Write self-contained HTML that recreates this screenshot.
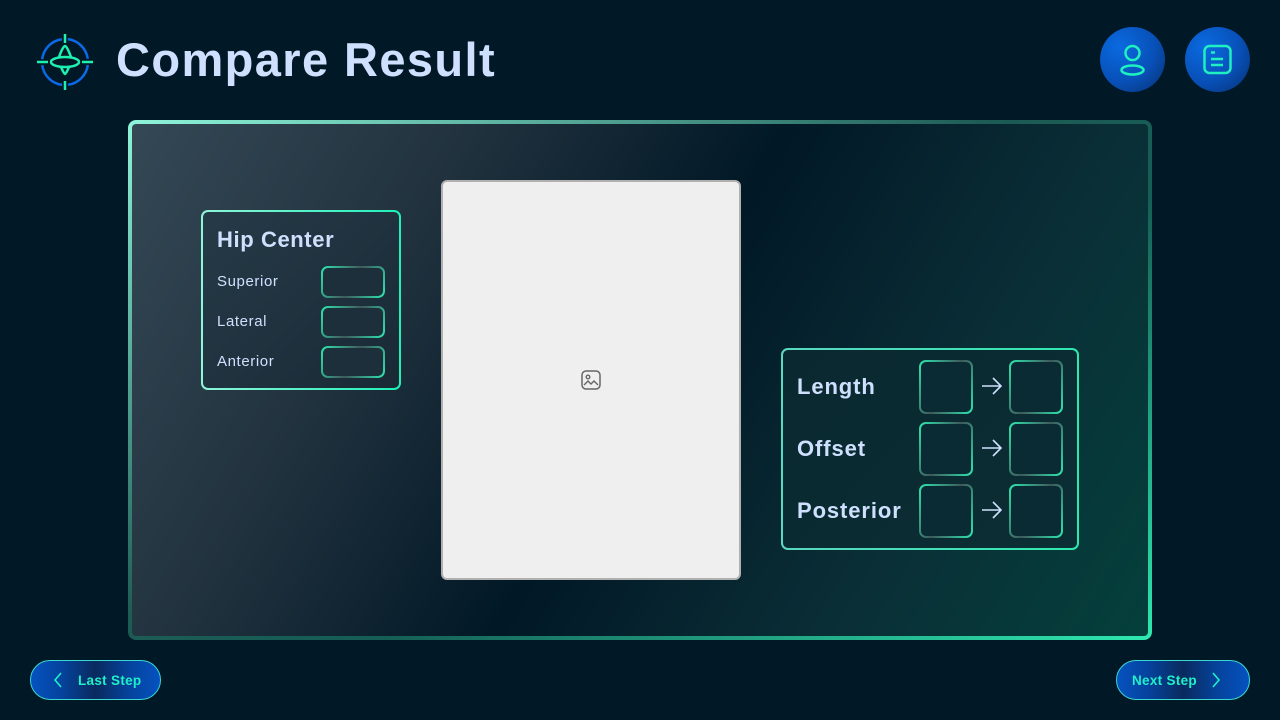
<!DOCTYPE html>
<html><head><meta charset="utf-8"><style>
*{margin:0;padding:0;box-sizing:border-box}
body{width:1280px;height:720px;background:#011826;position:relative;overflow:hidden;font-family:"Liberation Sans",sans-serif;color:#cfe0ff}
.title{position:absolute;left:116px;top:32px;font-size:47px;font-weight:bold;color:#cfe0ff;letter-spacing:1.4px}
.circ{position:absolute;top:27px;width:65px;height:65px;border-radius:50%;background:radial-gradient(circle at 30% 30%,#0a6ae0,#0850b8 55%,#06306e)}
.main{position:absolute;left:128px;top:120px;width:1024px;height:520px;border-radius:8px;border:4px solid transparent;background:linear-gradient(120deg,#344855 0%,#22333f 25%,#011826 50%,#0a2e36 75%,#04403c 100%) padding-box,linear-gradient(150deg,#8ff5da,#1d5b55 45%,#155e55 60%,#2ee8b0) border-box}
.lbl{position:absolute;left:217px;font-size:15px;color:#cfe0ff;letter-spacing:0.6px}
.in{width:64px;height:32px;border-radius:7px;background:linear-gradient(#1d2f3a,#1d2f3a) padding-box,linear-gradient(120deg,#2ee8b0,#3e5a5c 50%,#2ee8b0) border-box}
.sq{width:54px;height:54px;border-radius:7px;background:linear-gradient(#0a2b33,#0a2b33) padding-box,linear-gradient(120deg,#2ee8b0,#3e5a5c 50%,#2ee8b0) border-box}
.bl{position:absolute;left:797px;font-size:22px;font-weight:bold;color:#cfe0ff;letter-spacing:0.9px}
.arr{position:absolute;left:981px}
.btn{position:absolute;top:660px;height:40px;border-radius:20px;border:1px solid #3ad8d0;background:linear-gradient(90deg,#0552c0,#05429a 25%,#0a2a5e 50%,#05429a 75%,#0552c0);color:#1ef0c8;font-weight:bold;font-size:13.5px;display:flex;align-items:center;letter-spacing:0.3px}
</style></head><body>
<svg style="position:absolute;left:36px;top:34px" width="58" height="56" viewBox="0 0 58 56">
<circle cx="29" cy="28" r="23" fill="none" stroke="#0a6ae8" stroke-width="2.5" stroke-dasharray="30 6" stroke-dashoffset="-3"/>
<path d="M29 0v9M29 47v9M1 28h11M46 28h11" stroke="#1ef0b0" stroke-width="2.5"/>
<ellipse cx="29" cy="28" rx="14" ry="5" fill="none" stroke="#1ef0b0" stroke-width="2.5"/>
<path d="M23 23Q27 12 29 12Q31 12 35 23M25 33Q28 40 29 40Q30 40 33 33" fill="none" stroke="#1ef0b0" stroke-width="2.5"/>
</svg>
<div class="title">Compare Result</div>
<div class="circ" style="left:1100px"><svg width="65" height="65" viewBox="0 0 65 65"><circle cx="32.5" cy="26" r="7" fill="none" stroke="#1ef0c0" stroke-width="2.5"/><ellipse cx="32.5" cy="43" rx="11" ry="4.5" fill="none" stroke="#1ef0c0" stroke-width="2.5"/></svg></div>
<div class="circ" style="left:1185px"><svg width="65" height="65" viewBox="0 0 65 65"><rect x="19.5" y="19" width="26" height="27" rx="5" fill="none" stroke="#1ef0c0" stroke-width="2.5"/><path d="M26 25.5h4M26 32h12M26 38h12" stroke="#1ef0c0" stroke-width="2.5"/></svg></div>
<div class="main"></div>
<div style="position:absolute;left:201px;top:210px;width:200px;height:180px;border-radius:7px;border:2px solid transparent;background:linear-gradient(135deg,#263a47,#192a36) padding-box,linear-gradient(90deg,#8ff5da,#1ef0b8) border-box"></div>
<div style="position:absolute;left:217px;top:227px;font-size:22px;font-weight:bold;letter-spacing:0.6px">Hip Center</div>
<div class="lbl" style="top:273px">Superior</div>
<div class="lbl" style="top:313px">Lateral</div>
<div class="lbl" style="top:353px">Anterior</div>
<div class="in" style="position:absolute;left:321px;top:266px;border:2px solid transparent"></div>
<div class="in" style="position:absolute;left:321px;top:306px;border:2px solid transparent"></div>
<div class="in" style="position:absolute;left:321px;top:346px;border:2px solid transparent"></div>
<div style="position:absolute;left:441px;top:180px;width:300px;height:400px;background:#efefef;border:2px solid #b0b0b0;border-radius:6px"></div>
<svg style="position:absolute;left:580px;top:369px" width="22" height="22" viewBox="0 0 22 22"><rect x="2" y="2" width="18" height="18" rx="4" fill="none" stroke="#666" stroke-width="1.5"/><circle cx="8" cy="8" r="1.8" fill="none" stroke="#666" stroke-width="1.4"/><path d="M4 16l4-4 3 3 3-3 4 4" fill="none" stroke="#666" stroke-width="1.4"/></svg>
<div style="position:absolute;left:781px;top:348px;width:298px;height:202px;border-radius:7px;border:2px solid transparent;background:linear-gradient(135deg,#0a2830,#0b2e34) padding-box,linear-gradient(90deg,#5ad8c0,#2ee8b0) border-box"></div>
<div class="bl" style="top:374px">Length</div>
<div class="bl" style="top:436px">Offset</div>
<div class="bl" style="top:498px">Posterior</div>
<div class="sq" style="position:absolute;left:919px;top:360px;border:2px solid transparent"></div>
<div class="sq" style="position:absolute;left:1009px;top:360px;border:2px solid transparent"></div>
<div class="sq" style="position:absolute;left:919px;top:422px;border:2px solid transparent"></div>
<div class="sq" style="position:absolute;left:1009px;top:422px;border:2px solid transparent"></div>
<div class="sq" style="position:absolute;left:919px;top:484px;border:2px solid transparent"></div>
<div class="sq" style="position:absolute;left:1009px;top:484px;border:2px solid transparent"></div>
<svg class="arr" style="top:376px" width="22" height="20" viewBox="0 0 22 20"><path d="M1 10h19M12 2l8 8-8 8" fill="none" stroke="#cfe0ff" stroke-width="1.6"/></svg>
<svg class="arr" style="top:438px" width="22" height="20" viewBox="0 0 22 20"><path d="M1 10h19M12 2l8 8-8 8" fill="none" stroke="#cfe0ff" stroke-width="1.6"/></svg>
<svg class="arr" style="top:500px" width="22" height="20" viewBox="0 0 22 20"><path d="M1 10h19M12 2l8 8-8 8" fill="none" stroke="#cfe0ff" stroke-width="1.6"/></svg>
<div class="btn" style="left:30px;width:131px"><svg style="margin-left:21px" width="12" height="18" viewBox="0 0 12 18"><path d="M9 2L3 9l6 7" fill="none" stroke="#1ef0c8" stroke-width="1.6"/></svg><span style="margin-left:14px">Last Step</span></div>
<div class="btn" style="left:1116px;width:134px"><span style="margin-left:15px">Next Step</span><svg style="margin-left:13px" width="12" height="18" viewBox="0 0 12 18"><path d="M3 2l6 7-6 7" fill="none" stroke="#1ef0c8" stroke-width="1.6"/></svg></div>
</body></html>
